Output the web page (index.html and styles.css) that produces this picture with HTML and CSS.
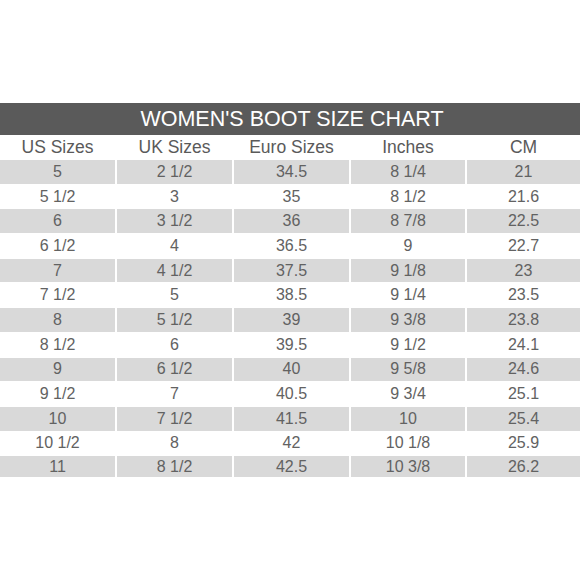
FILE: index.html
```html
<!DOCTYPE html>
<html>
<head>
<meta charset="utf-8">
<link rel="stylesheet" href="styles.css">
</head>
<body>
<div class="chart">
  <div class="title">WOMEN'S BOOT SIZE CHART</div>
  <div class="row head"><div>US Sizes</div><div>UK Sizes</div><div>Euro Sizes</div><div>Inches</div><div>CM</div></div>
  <div class="row shade"><div>5</div><div>2 1/2</div><div>34.5</div><div>8 1/4</div><div>21</div></div>
  <div class="row"><div>5 1/2</div><div>3</div><div>35</div><div>8 1/2</div><div>21.6</div></div>
  <div class="row shade"><div>6</div><div>3 1/2</div><div>36</div><div>8 7/8</div><div>22.5</div></div>
  <div class="row"><div>6 1/2</div><div>4</div><div>36.5</div><div>9</div><div>22.7</div></div>
  <div class="row shade"><div>7</div><div>4 1/2</div><div>37.5</div><div>9 1/8</div><div>23</div></div>
  <div class="row"><div>7 1/2</div><div>5</div><div>38.5</div><div>9 1/4</div><div>23.5</div></div>
  <div class="row shade"><div>8</div><div>5 1/2</div><div>39</div><div>9 3/8</div><div>23.8</div></div>
  <div class="row"><div>8 1/2</div><div>6</div><div>39.5</div><div>9 1/2</div><div>24.1</div></div>
  <div class="row shade"><div>9</div><div>6 1/2</div><div>40</div><div>9 5/8</div><div>24.6</div></div>
  <div class="row"><div>9 1/2</div><div>7</div><div>40.5</div><div>9 3/4</div><div>25.1</div></div>
  <div class="row shade"><div>10</div><div>7 1/2</div><div>41.5</div><div>10</div><div>25.4</div></div>
  <div class="row"><div>10 1/2</div><div>8</div><div>42</div><div>10 1/8</div><div>25.9</div></div>
  <div class="row shade last"><div>11</div><div>8 1/2</div><div>42.5</div><div>10 3/8</div><div>26.2</div></div>
</div>
</body>
</html>
```
FILE: styles.css
```css
html, body {
  margin: 0;
  padding: 0;
  background: #ffffff;
}
body {
  width: 580px;
  height: 580px;
  overflow: hidden;
  font-family: "Liberation Sans", Arial, sans-serif;
}
.chart {
  padding-top: 103px;
}
.title {
  height: 32px;
  background: #5a5a5a;
  color: #ffffff;
  font-size: 21.5px;
  line-height: 33px;
  text-align: center;
  padding-left: 4px;
}
.row {
  display: grid;
  grid-template-columns: 115px 115px 115px 114px 1fr;
  column-gap: 2px;
  height: 24.7px;
  color: #626262;
  font-size: 16px;
}
.row > div {
  display: flex;
  align-items: center;
  justify-content: center;
  height: 23.7px;
}
.row.head {
  height: 25px;
}
.row.head > div {
  height: 25px;
  color: #5a5a5a;
  font-size: 17.5px;
}
.row.shade > div {
  background: #d9d9d9;
}
.row.last {
  height: 20.6px;
}
.row.last > div {
  height: 20.6px;
  padding-top: 3px;
  box-sizing: border-box;
  align-items: flex-start;
  line-height: 16px;
}
```
